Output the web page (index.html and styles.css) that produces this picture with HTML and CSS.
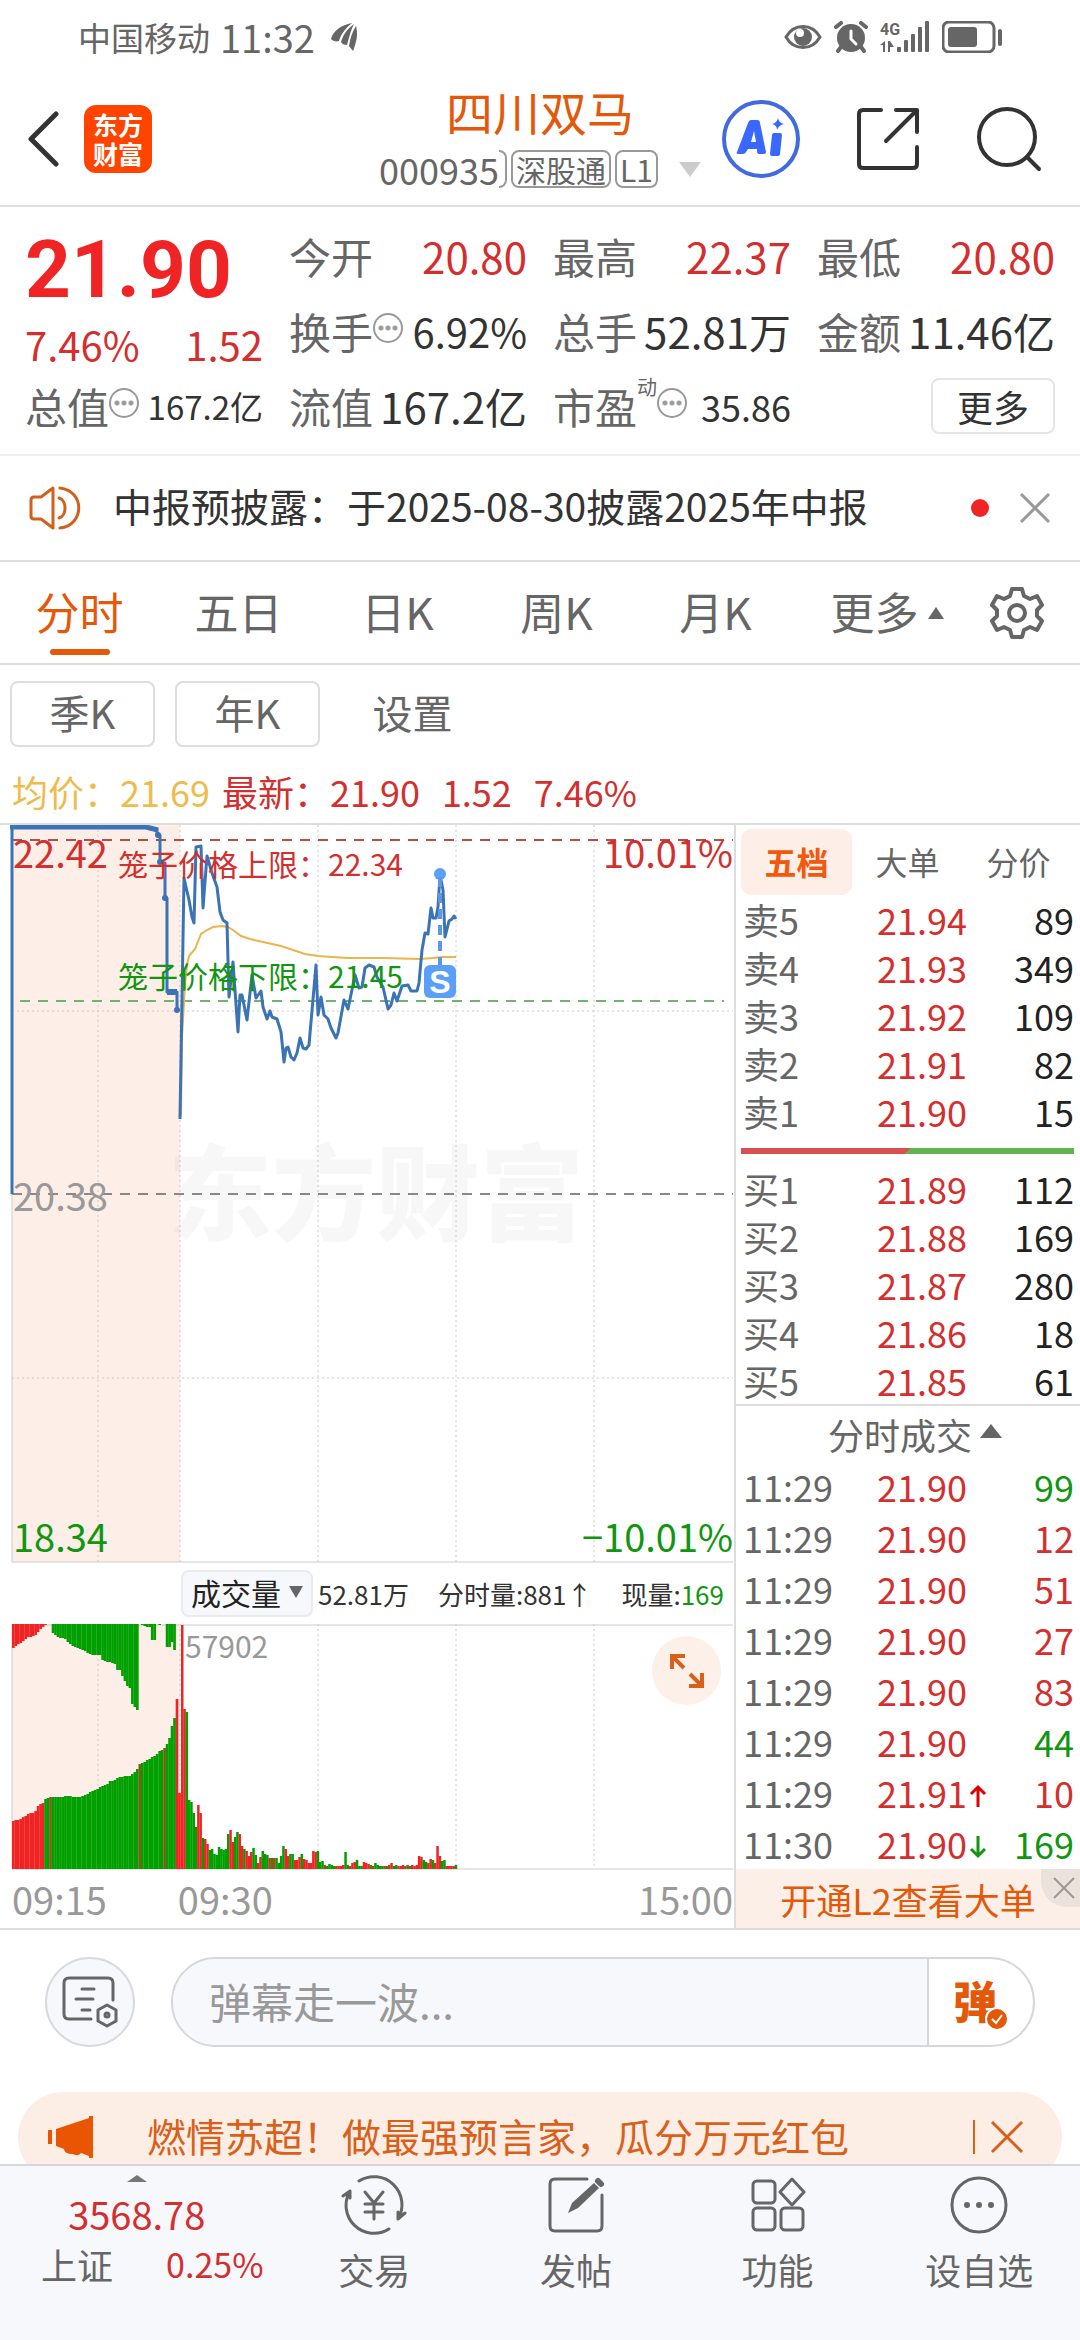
FILE: index.html
```html
<!DOCTYPE html>
<html lang="zh-CN">
<head>
    <meta charset="UTF-8">
    <meta name="viewport" content="width=device-width, initial-scale=1.0">
    <title>四川双马 000935</title>
    <link rel="stylesheet" href="styles.css">
</head>
<body>

<!-- Status bar -->
<div class="status-bar">
    <span class="carrier">中国移动</span>
    <span class="clock">11:32</span>
    <svg class="leaf" width="27" height="28" viewBox="0 0 27 28" fill="#666">
        <path d="M0 16C2 8 10 2 21 0C14 6 10 11 8 18C5 19 2 18 0 16Z"/>
        <path d="M10 19C12 12 16 6 23 1C19 9 18 15 16 22C13 22 11 21 10 19Z"/>
        <path d="M18 23C19 16 21 9 25 3C27 10 26 18 22 28Z"/>
    </svg>
    <div class="status-icons">
        <svg width="38" height="32" viewBox="0 0 38 32">
            <path d="M2 16C10 2 28 2 36 16C28 30 10 30 2 16Z" fill="none" stroke="#666" stroke-width="3"/>
            <circle cx="19" cy="16" r="9" fill="#666"/>
            <circle cx="16" cy="12" r="4" fill="#fff"/>
        </svg>
        <svg width="34" height="32" viewBox="0 0 34 32">
            <circle cx="17" cy="17" r="14" fill="#666"/>
            <path d="M2 6L7 2M27 2L32 6M7 26L4 30M27 26L30 30" stroke="#666" stroke-width="4" stroke-linecap="round"/>
            <path d="M17 10V18L22 23" fill="none" stroke="#fff" stroke-width="3" stroke-linecap="round"/>
        </svg>
        <svg width="50" height="32" viewBox="0 0 50 32" fill="#666">
            <text x="0" y="14" class="net-label">4G</text>
            <path d="M0 24L5 20V31H3V24ZM8 20H10L14 26H10V31H8Z"/>
            <rect x="17" y="26" width="4" height="5" rx="1"/>
            <rect x="24" y="19" width="4" height="12" rx="1"/>
            <rect x="31" y="13" width="4" height="18" rx="1"/>
            <rect x="38" y="6" width="4" height="25" rx="1"/>
            <rect x="45" y="0" width="4" height="31" rx="1"/>
        </svg>
        <svg width="60" height="32" viewBox="0 0 60 32">
            <rect x="1" y="1" width="51" height="30" rx="6" fill="none" stroke="#666" stroke-width="3"/>
            <rect x="6" y="6" width="29" height="20" rx="3" fill="#666"/>
            <rect x="56" y="8" width="4" height="17" rx="2" fill="#666"/>
        </svg>
    </div>
</div>

<!-- Title bar -->
<header class="header">
    <div class="header-left">
        <button class="icon-btn" aria-label="返回">
            <svg width="32" height="56" viewBox="0 0 32 56" fill="none" stroke="#333" stroke-width="5" stroke-linecap="round" stroke-linejoin="round"><path d="M28 3L3 28L28 53"/></svg>
        </button>
        <a class="logo" href="#"><span>东方</span><span>财富</span></a>
    </div>
    <div class="header-title">
        <h1>四川双马</h1>
        <div class="stock-code">
            <span>000935</span><i class="tag-edge"></i>
            <span class="tag">深股通</span>
            <span class="tag">L1</span>
            <i class="caret-down"></i>
        </div>
    </div>
    <div class="header-right">
        <button class="icon-btn" aria-label="AI">
            <svg width="78" height="78" viewBox="0 0 78 78">
                <circle cx="39" cy="39" r="37" fill="none" stroke="#4169e1" stroke-width="4"/>
                <path fill="#3a68ff" fill-rule="evenodd" d="M15 52L26 23Q27 20 29 20H35Q38 20 38 23L44 52Q44 54 42 54H37Q35 54 35 51V49H26L24 52Q23 54 21 54H16Q14 54 15 52ZM29 42H34L32 31Z"/>
                <path fill="#3a68ff" d="M52 33H58Q60 33 60 35L58 54Q58 56 56 56H50Q48 56 48 54L50 35Q50 33 52 33Z"/>
                <path fill="#3a68ff" d="M56 18Q57 23 62 24Q57 25 55 30Q55 25 50 24Q55 23 56 18Z"/>
            </svg>
        </button>
        <button class="icon-btn" aria-label="分享">
            <svg width="64" height="64" viewBox="0 0 64 64" fill="none" stroke="#333" stroke-width="4" stroke-linecap="round" stroke-linejoin="round">
                <path d="M25 3H7Q3 3 3 7V57Q3 61 7 61H57Q61 61 61 57V40"/>
                <path d="M40 3H61V25M61 3L30 34"/>
            </svg>
        </button>
        <button class="icon-btn" aria-label="搜索">
            <svg width="66" height="66" viewBox="0 0 66 66" fill="none" stroke="#333" stroke-width="4" stroke-linecap="round"><circle cx="31" cy="31" r="28"/><path d="M51 51L63 63"/></svg>
        </button>
    </div>
</header>

<main>
    <!-- Quote summary -->
    <section class="quote">
        <div class="quote-main">
            <strong>21.90</strong>
            <div class="quote-change"><span>7.46%</span><span>1.52</span></div>
        </div>
        <div class="field"><label>今开</label><b class="red">20.80</b></div>
        <div class="field"><label>最高</label><b class="red">22.37</b></div>
        <div class="field"><label>最低</label><b class="red">20.80</b></div>
        <div class="field"><label>换手</label><i class="hint"></i><b class="large">6.92%</b></div>
        <div class="field"><label>总手</label><b>52.81万</b></div>
        <div class="field"><label>金额</label><b>11.46亿</b></div>
        <div class="field"><label>总值</label><i class="hint"></i><b class="small">167.2亿</b></div>
        <div class="field"><label>流值</label><b>167.2亿</b></div>
        <div class="field"><label>市盈</label><sup>动</sup><i class="hint"></i><b class="mid">35.86</b></div>
        <div class="field"><button class="more-btn">更多</button></div>
    </section>

    <!-- Notice -->
    <section class="notice">
        <svg width="54" height="46" viewBox="0 0 54 46" fill="none" stroke="#d2601a" stroke-width="3" stroke-linejoin="round">
            <path d="M24 3L12 12H5Q2 12 2 15V31Q2 34 5 34H12L24 43Z"/>
            <path d="M30 13C38 15 38 31 30 33M31 3C56 6 56 40 31 43" stroke-linecap="round"/>
        </svg>
        <p>中报预披露：于2025-08-30披露2025年中报</p>
        <i class="dot"></i>
        <button class="icon-btn" aria-label="关闭">
            <svg width="32" height="32" viewBox="0 0 32 32" stroke="#999" stroke-width="3"><path d="M2 2L30 30M30 2L2 30"/></svg>
        </button>
    </section>

    <!-- Period tabs -->
    <nav class="tabs">
        <button class="tab active">分时</button>
        <button class="tab">五日</button>
        <button class="tab">日K</button>
        <button class="tab">周K</button>
        <button class="tab">月K</button>
        <button class="tab">更多<i class="caret-up"></i></button>
        <button class="tab-gear" aria-label="设置">
            <svg width="54" height="54" viewBox="0 0 54 54" fill="none" stroke="#666" stroke-width="4" stroke-linejoin="round">
                <path d="M22 3H32L34 10L40 13L47 10L52 19L47 24V30L52 35L47 44L40 41L34 44L32 51H22L20 44L14 41L7 44L2 35L7 30V24L2 19L7 10L14 13L20 10Z"/>
                <circle cx="27" cy="27" r="8"/>
            </svg>
        </button>
    </nav>
    <div class="sub-tabs">
        <button class="boxed">季K</button>
        <button class="boxed">年K</button>
        <button>设置</button>
    </div>
    <div class="legend">
        <span class="avg">均价：21.69</span>
        <span>最新：21.90</span>
        <span>1.52</span>
        <span>7.46%</span>
    </div>

    <section class="board">
        <div class="charts">
            <!-- Price chart -->
            <svg class="price-chart" viewBox="0 0 734 738">
                <rect x="12" y="0" width="168" height="737" fill="#fdeee7"/>
                <text class="watermark" x="168" y="408">东方财富</text>
                <g class="grid-dot">
                    <path d="M98 0V737M180 0V737M318 0V737M456 0V737M594 0V737M12 186H733M12 553H733"/>
                </g>
                <path d="M12 369V737H733" fill="none" stroke="#ccc"/>
                <path d="M12 15H733" class="dash" stroke="#b05048"/>
                <path d="M20 176H724" class="dash" stroke="#6fb36f"/>
                <path d="M12 369H733" class="dash" stroke="#888"/>
                <g class="axis">
                    <text x="13" y="43" fill="#d32f2f">22.42</text>
                    <text x="733" y="43" fill="#d32f2f" text-anchor="end">10.01%</text>
                    <text x="13" y="386" fill="#999">20.38</text>
                    <text x="13" y="727" fill="#119611">18.34</text>
                    <text x="733" y="727" fill="#119611" text-anchor="end">−10.01%</text>
                </g>
                <polyline class="avg-line" points="181,290 182,212 185,160 187,140 189,131 195,124 201,109 207,105 213,102 222,101 228,102 233,105 241,111 250,114 263,117 281,121 290,124 305,129 318,131 347,133 383,133 420,134 433,133 443,132 456,132"/>
                <path class="price-line" d="M12 369V2H146L150 4H157V10H160V37L165 38V73H167V167H177V185"/>
                <path d="M10 2H146L158 5" fill="none" stroke="#3b73b5" stroke-width="5"/>
                <path d="M167 167H177" stroke="#3b73b5" stroke-width="6"/>
                <g fill="#3b73b5"><circle cx="158" cy="10" r="3"/><circle cx="160" cy="37" r="3"/><circle cx="165" cy="73" r="3"/><circle cx="177" cy="185" r="3"/></g>
                <polyline class="price-line" points="180,294 184,53 189,75 192,92 194,98 196,22 201,21 203,83 207,31 212,48 217,62 220,87 223,95 227,98 229,172 233,137 238,207 240,170 242,170 247,195 252,150 256,173 261,166 263,182 267,194 270,186 272,192 277,194 281,207 284,237 286,223 288,222 291,232 294,235 297,228 300,213 303,223 306,224 309,220 316,140 318,190 321,172 324,190 328,194 331,203 336,213 338,208 344,175 348,184 355,150 359,163 362,162 365,143 369,140 374,142 377,152 383,162 388,184 391,180 394,168 397,176 402,161 408,160 411,166 417,166 419,158 422,125 425,108 428,109 431,83 433,93 436,93 438,82 440,50 443,65 445,112 449,96 452,94 454,91 456,94"/>
                <g class="limit">
                    <text x="118" y="51" fill="#d32f2f">笼子价格上限：22.34</text>
                    <text x="118" y="163" fill="#119611">笼子价格下限：21.45</text>
                </g>
                <circle cx="440" cy="49" r="6" fill="#5c9ff8"/>
                <path d="M440 52V140" stroke="#5b96ea" stroke-width="4" stroke-dasharray="10 6"/>
                <rect x="424" y="140" width="32" height="33" rx="6" fill="#5c9ff8"/>
                <text class="sell-mark" x="440" y="168">S</text>
            </svg>

            <div class="volume-head">
                <button class="volume-select">成交量<i></i></button>
                <span>52.81万</span>
                <span>分时量:881↑</span>
                <span>现量:<em>169</em></span>
            </div>

            <!-- Volume chart, bars are added by script.js -->
            <div class="volume-wrap">
                <svg class="volume-chart" viewBox="0 0 734 246">
                    <rect x="12" y="0" width="168" height="245" fill="#fdeee7"/>
                    <path class="grid-dot" d="M98 0V245M180 0V245M318 0V245M456 0V245M594 0V245"/>
                    <path d="M12 0V245M12 1H733M12 245H733" fill="none" stroke="#ccc"/>
                    <g id="volume-bars"></g>
                    <text class="volume-max" x="185" y="34">57902</text>
                </svg>
                <button class="expand" aria-label="全屏">
                    <svg width="34" height="34" viewBox="0 0 34 34" fill="none" stroke="#d9601a" stroke-width="4"><path d="M2 15V2H15M2 2L14 14M20 20L32 32M32 19V32H19"/></svg>
                </button>
            </div>
            <div class="time-axis"><span>09:15</span><span>09:30</span><span>15:00</span></div>
        </div>

        <!-- Order book -->
        <aside class="book">
            <div class="book-tabs">
                <button class="active">五档</button>
                <button>大单</button>
                <button>分价</button>
            </div>
            <table class="levels">
                <tr><th>卖5</th><td>21.94</td><td>89</td></tr>
                <tr><th>卖4</th><td>21.93</td><td>349</td></tr>
                <tr><th>卖3</th><td>21.92</td><td>109</td></tr>
                <tr><th>卖2</th><td>21.91</td><td>82</td></tr>
                <tr><th>卖1</th><td>21.90</td><td>15</td></tr>
            </table>
            <div class="ratio"></div>
            <table class="levels">
                <tr><th>买1</th><td>21.89</td><td>112</td></tr>
                <tr><th>买2</th><td>21.88</td><td>169</td></tr>
                <tr><th>买3</th><td>21.87</td><td>280</td></tr>
                <tr><th>买4</th><td>21.86</td><td>18</td></tr>
                <tr><th>买5</th><td>21.85</td><td>61</td></tr>
            </table>
            <button class="trades-head">分时成交<i></i></button>
            <table class="trades">
                <tr><th>11:29</th><td>21.90</td><td class="green">99</td></tr>
                <tr><th>11:29</th><td>21.90</td><td>12</td></tr>
                <tr><th>11:29</th><td>21.90</td><td>51</td></tr>
                <tr><th>11:29</th><td>21.90</td><td>27</td></tr>
                <tr><th>11:29</th><td>21.90</td><td>83</td></tr>
                <tr><th>11:29</th><td>21.90</td><td class="green">44</td></tr>
                <tr><th>11:29</th><td>21.91<svg width="18" height="24" viewBox="0 0 18 24" fill="none" stroke="#d00" stroke-width="3"><path d="M9 23V3M2 10L9 3L16 10"/></svg></td><td>10</td></tr>
                <tr><th>11:30</th><td>21.90<svg width="18" height="24" viewBox="0 0 18 24" fill="none" stroke="#119611" stroke-width="3"><path d="M9 1V21M2 14L9 21L16 14"/></svg></td><td class="green">169</td></tr>
            </table>
            <div class="l2">
                <a href="#">开通L2查看大单</a>
                <button aria-label="关闭">
                    <svg width="22" height="22" viewBox="0 0 22 22" stroke="#999" stroke-width="2"><path d="M1 1L21 21M21 1L1 21"/></svg>
                </button>
            </div>
        </aside>
    </section>

    <!-- Comment bar -->
    <form class="comment">
        <button type="button" class="comment-settings" aria-label="弹幕设置">
            <svg width="56" height="52" viewBox="0 0 56 52" fill="none" stroke="#666" stroke-width="3" stroke-linecap="round">
                <path d="M29 43H7Q2 43 2 38V7Q2 2 7 2H46Q51 2 51 7V24"/>
                <path d="M20 13H32M14 23H31M20 34H28"/>
                <path d="M45 29L54 34V45L45 50L36 45V34Z" stroke-linejoin="round"/>
                <circle cx="45" cy="39" r="2"/>
            </svg>
        </button>
        <div class="comment-box">
            <input type="text" placeholder="弹幕走一波..." aria-label="弹幕">
            <button type="button" class="send">弹<svg width="24" height="24" viewBox="0 0 24 24"><circle cx="12" cy="12" r="11" fill="#e4580a" stroke="#fff" stroke-width="2"/><path d="M7 12L11 16L17 8" fill="none" stroke="#fff" stroke-width="2"/></svg></button>
        </div>
    </form>

    <!-- Promo -->
    <div class="promo">
        <svg width="46" height="42" viewBox="0 0 46 42" fill="#ea5504">
            <rect x="0" y="14" width="4" height="14"/>
            <path d="M8 13L41 2V0H45V42H41V40L33 37Q30 41 25 38Q16 38 16 33L8 30Z"/>
        </svg>
        <a href="#">燃情苏超！做最强预言家，瓜分万元红包</a>
        <button class="icon-btn" aria-label="关闭">
            <svg width="34" height="34" viewBox="0 0 34 34" stroke="#d9601a" stroke-width="3"><path d="M2 2L32 32M32 2L2 32"/></svg>
        </button>
    </div>
</main>

<!-- Bottom bar -->
<nav class="bottom-nav">
    <a class="index" href="#">
        <i></i>
        <b>3568.78</b>
        <span class="index-row"><span>上证</span><em>0.25%</em></span>
    </a>
    <a href="#">
        <svg width="66" height="60" viewBox="0 0 66 60" fill="none" stroke="#666" stroke-width="3" stroke-linecap="round" stroke-linejoin="round">
            <path d="M18 6A28 28 0 0 1 57 44L64 38M57 44V37"/>
            <path d="M48 54A28 28 0 0 1 9 16L2 21M9 16V23"/>
            <path d="M24 17L33 28L42 17M33 28V44M24 29H42M24 37H42"/>
        </svg>
        <span>交易</span>
    </a>
    <a href="#">
        <svg width="66" height="60" viewBox="0 0 66 60" fill="none" stroke="#666" stroke-width="3" stroke-linecap="round">
            <path d="M44 4H12Q7 4 7 9V51Q7 56 12 56H54Q59 56 59 51V20"/>
            <path d="M25 38L29 28L51 8L56 13L35 33Z" fill="#666" stroke="none"/>
            <path d="M55 6L58 9" stroke-width="6"/>
        </svg>
        <span>发帖</span>
    </a>
    <a href="#">
        <svg width="66" height="60" viewBox="0 0 66 60" fill="none" stroke="#666" stroke-width="3" stroke-linejoin="round">
            <rect x="8" y="6" width="22" height="22" rx="4"/>
            <rect x="8" y="33" width="22" height="22" rx="4"/>
            <rect x="36" y="33" width="22" height="22" rx="4"/>
            <path d="M47 4L59 17L47 30L35 17Z"/>
        </svg>
        <span>功能</span>
    </a>
    <a href="#">
        <svg width="66" height="60" viewBox="0 0 66 60" fill="none" stroke="#666" stroke-width="3">
            <circle cx="33" cy="30" r="27"/>
            <g fill="#666" stroke="none"><circle cx="21" cy="30" r="3"/><circle cx="33" cy="30" r="3"/><circle cx="45" cy="30" r="3"/></g>
        </svg>
        <span>设自选</span>
    </a>
</nav>

<script src="script.js"></script>
</body>
</html>
```
FILE: styles.css
```css
* {
    box-sizing: border-box;
}
body {
    margin: 0;
    height: 100vh;
    display: flex;
    flex-direction: column;
    font-family: "Noto Sans CJK SC", sans-serif;
    font-size: 36px;
    color: #666;
    background-color: #fff;
}
button, input {
    font-family: inherit;
    font-size: inherit;
    color: inherit;
    background: none;
    border: 0;
    padding: 0;
    margin: 0;
}
a {
    color: inherit;
    text-decoration: none;
}
i, em {
    font-style: normal;
}
svg {
    display: block;
    flex-shrink: 0;
}
.red {
    color: #d32f2f;
}
.icon-btn {
    display: flex;
}

/* status bar */
.status-bar {
    display: flex;
    align-items: center;
    height: 73px;
    padding: 0 78px;
    flex-shrink: 0;
}
.carrier {
    font-size: 33px;
}
.clock {
    font-size: 38px;
    margin-left: 10px;
}
.leaf {
    margin-left: 16px;
}
.status-icons {
    display: flex;
    gap: 12px;
    margin-left: auto;
}
.net-label {
    font: bold 16px Roboto, sans-serif;
}

/* title bar */
.header {
    display: grid;
    grid-template-columns: 1fr auto 1fr;
    align-items: center;
    height: 134px;
    padding: 0 28px;
    border-bottom: 2px solid #ddd;
    flex-shrink: 0;
}
.header-left, .header-right {
    display: flex;
    align-items: center;
}
.header-left {
    gap: 24px;
}
.header-right {
    gap: 56px;
    justify-content: flex-end;
    padding-right: 10px;
}
.logo {
    display: flex;
    flex-direction: column;
    align-items: center;
    justify-content: center;
    width: 68px;
    height: 68px;
    border-radius: 12px;
    background-color: #ff4400;
    color: #fff;
    font-size: 25px;
    font-weight: bold;
    line-height: 29px;
}
.header-title {
    text-align: center;
}
.header-title h1 {
    margin: 0;
    font-size: 47px;
    font-weight: normal;
    line-height: 60px;
    color: #e4580a;
}
.stock-code {
    display: flex;
    align-items: center;
    line-height: 56px;
}
.tag-edge {
    width: 8px;
    height: 38px;
    border: 2px solid #999;
    border-left: 0;
    border-radius: 0 8px 8px 0;
}
.tag {
    margin-left: 4px;
    padding: 0 3px;
    border: 2px solid #999;
    border-radius: 8px;
    font-size: 30px;
    line-height: 34px;
}
.caret-down {
    margin-left: 21px;
    border: 11px solid transparent;
    border-top: 15px solid #ccc;
    border-bottom: 0;
}

main {
    flex: 1;
    min-height: 0;
    overflow: hidden;
}

/* quote */
.quote {
    display: grid;
    grid-template-columns: repeat(4, 1fr);
    grid-auto-rows: 75px;
    column-gap: 26px;
    padding: 12px 25px 10px;
    border-bottom: 2px solid #eee;
}
.quote-main {
    grid-row: span 2;
    color: #d32f2f;
}
.quote-main strong {
    display: block;
    font-family: Roboto, sans-serif;
    font-size: 80px;
    line-height: 102px;
    color: #f02424;
}
.quote-change {
    display: flex;
    justify-content: space-between;
    font-size: 40px;
    line-height: 46px;
}
.field {
    display: flex;
    align-items: center;
    padding-bottom: 2px;
    font-size: 42px;
    white-space: nowrap;
}
.field b {
    margin-left: auto;
    font-weight: normal;
    color: #333;
}
.field b.red {
    color: #d32f2f;
}
.field b.small {
    font-size: 33px;
}
.field b.mid {
    font-size: 36px;
}
.field b.large {
    font-size: 40px;
}
.field sup {
    align-self: flex-start;
    font-size: 20px;
    line-height: 36px;
}
.hint {
    width: 30px;
    height: 30px;
    border: 2px solid #999;
    border-radius: 50%;
    background: radial-gradient(circle, #999 2px, transparent 3px) center / 7px 30px repeat-x content-box;
    padding: 0 2px;
    margin-bottom: 6px;
}
.more-btn {
    margin-left: auto;
    width: 124px;
    height: 56px;
    border: 2px solid #e5e5e5;
    border-radius: 8px;
    font-size: 36px;
    line-height: 46px;
    color: #333;
}

/* notice */
.notice {
    display: flex;
    align-items: center;
    height: 106px;
    padding: 0 29px;
    border-bottom: 2px solid #ddd;
    font-size: 39px;
    color: #333;
}
.notice p {
    margin: 0 0 0 30px;
    padding-bottom: 6px;
    flex: 1;
    white-space: nowrap;
}
.dot {
    width: 18px;
    height: 18px;
    margin-right: 30px;
    border-radius: 50%;
    background-color: #f02424;
}

/* tabs */
.tabs {
    display: flex;
    height: 103px;
    border-bottom: 2px solid #ddd;
}
.tab {
    position: relative;
    flex: 159;
    padding-bottom: 3px;
    font-size: 44px;
    line-height: 60px;
}
.tab.active {
    color: #e4580a;
}
.tab.active::after {
    content: "";
    position: absolute;
    left: 50%;
    bottom: 8px;
    width: 60px;
    height: 6px;
    margin-left: -30px;
    border-radius: 3px;
    background-color: #e4580a;
}
.caret-up {
    position: absolute;
    right: 10px;
    top: 45px;
    border: 8px solid transparent;
    border-bottom: 12px solid #666;
    border-top: 0;
}
.tab-gear {
    flex: 126;
    display: flex;
    align-items: center;
    justify-content: center;
}
.sub-tabs {
    display: flex;
    gap: 20px;
    padding: 16px 10px;
}
.sub-tabs button {
    width: 145px;
    height: 66px;
    padding-bottom: 4px;
    font-size: 40px;
    line-height: 58px;
}
.sub-tabs .boxed {
    border: 2px solid #ddd;
    border-radius: 8px;
}
.legend {
    display: flex;
    gap: 22px;
    padding: 0 12px 4px;
    line-height: 56px;
    color: #d32f2f;
}
.legend .avg {
    margin-right: -10px;
    color: #eebb4d;
}

/* charts */
.board {
    display: grid;
    grid-template-columns: 734fr 346fr;
    border-top: 2px solid #ddd;
    border-bottom: 2px solid #ddd;
}
.price-chart, .volume-chart {
    width: 100%;
    height: auto;
}
.grid-dot {
    fill: none;
    stroke: #ccc;
    stroke-width: 1;
    stroke-dasharray: 2 3;
}
.dash {
    fill: none;
    stroke-width: 2;
    stroke-dasharray: 10 8;
}
.watermark {
    font-size: 104px;
    font-weight: 900;
    fill: #000;
    fill-opacity: 0.03;
}
.axis {
    font-size: 38px;
}
.limit {
    font-size: 30px;
}
.price-line {
    fill: none;
    stroke: #3b73b5;
    stroke-width: 3;
    stroke-linejoin: round;
}
.avg-line {
    fill: none;
    stroke: #ecb44c;
    stroke-width: 2;
}
.sell-mark {
    font: bold 32px "Liberation Sans", sans-serif;
    fill: #fff;
    text-anchor: middle;
}
.volume-head {
    display: flex;
    align-items: center;
    justify-content: space-between;
    height: 61px;
    padding: 0 10px 0 181px;
    font-size: 26px;
    white-space: nowrap;
    color: #333;
}
.volume-head em {
    color: #119611;
}
.volume-select {
    display: flex;
    align-items: center;
    gap: 8px;
    height: 47px;
    margin-right: -24px;
    padding: 0 8px 4px;
    border: 2px solid #eaebee;
    border-radius: 8px;
    background-color: #f7f8fb;
    font-size: 30px;
    color: #222;
}
.volume-select i {
    border: 7px solid transparent;
    border-top: 12px solid #666;
    border-bottom: 0;
}
.volume-wrap {
    position: relative;
}
.volume-max {
    font-size: 30px;
    fill: #999;
}
.bar-r {
    fill: #f02424;
}
.bar-g {
    fill: #00a000;
}
.bar-b {
    fill: #91551a;
}
.expand {
    position: absolute;
    top: 12px;
    right: 13px;
    display: flex;
    align-items: center;
    justify-content: center;
    width: 69px;
    height: 69px;
    border-radius: 50%;
    background-color: #fdf0e9;
}
.time-axis {
    display: grid;
    grid-template-columns: 23% 1fr auto;
    padding: 0 1px 0 12px;
    font-size: 38px;
    line-height: 58px;
    color: #999;
}

/* order book */
.book {
    display: flex;
    flex-direction: column;
    border-left: 2px solid #ddd;
}
.book-tabs {
    display: grid;
    grid-template-columns: repeat(3, 1fr);
    padding: 4px 6px 0 5px;
    font-size: 32px;
}
.book-tabs button {
    height: 66px;
    padding-bottom: 2px;
    border-radius: 10px;
}
.book-tabs .active {
    background-color: #fdeee7;
    color: #f2590d;
    font-weight: bold;
}
.levels, .trades {
    width: 100%;
    table-layout: fixed;
    border-collapse: collapse;
    color: #d32f2f;
}
.levels tr {
    height: 48px;
    line-height: 48px;
}
.trades tr {
    height: 51px;
    line-height: 51px;
}
.book th {
    width: 141px;
    padding: 0 0 0 7px;
    font-weight: normal;
    text-align: left;
    color: #666;
}
.book td {
    padding: 0;
}
.book td:last-child {
    width: 80px;
    padding-right: 6px;
    text-align: right;
}
.levels td:last-child {
    color: #222;
}
.trades td svg {
    display: inline-block;
    margin-left: 2px;
}
.trades .green {
    color: #119611;
}
.ratio {
    height: 6px;
    margin: 13px 6px 10px 5px;
    background: linear-gradient(135deg, #d95050 50%, #62b350 50%);
}
.trades-head {
    display: flex;
    align-items: center;
    justify-content: center;
    gap: 8px;
    height: 57px;
    padding-left: 14px;
    border-top: 2px solid #ddd;
}
.trades-head i {
    margin-bottom: 6px;
    border: 11px solid transparent;
    border-bottom: 14px solid #666;
    border-top: 0;
}
.l2 {
    position: relative;
    flex: 1;
    display: flex;
    align-items: center;
    justify-content: center;
    background-color: #fcefe8;
    line-height: 54px;
    color: #e4580a;
}
.l2 button {
    position: absolute;
    top: 0;
    right: 0;
    display: flex;
    align-items: center;
    justify-content: center;
    width: 39px;
    height: 38px;
    padding-left: 6px;
    border-bottom-left-radius: 26px;
    background-color: #ece2dc;
}

/* comment bar */
.comment {
    display: flex;
    gap: 36px;
    padding: 27px 45px 45px;
}
.comment-settings {
    display: flex;
    align-items: center;
    justify-content: center;
    width: 90px;
    height: 90px;
    border: 2px solid #d8dadf;
    border-radius: 50%;
    background-color: #f7f8fb;
}
.comment-box {
    flex: 1;
    display: flex;
    height: 90px;
    border: 2px solid #d5d7da;
    border-radius: 45px;
    overflow: hidden;
}
.comment-box input {
    flex: 1;
    min-width: 0;
    padding: 0 36px 4px;
    background-color: #f7f8fb;
    font-size: 42px;
}
.comment-box input::placeholder {
    color: #999;
    opacity: 1;
}
.send {
    position: relative;
    width: 106px;
    padding: 0 12px 4px 0;
    border-left: 2px solid #d5d7da;
    font-size: 44px;
    font-weight: 900;
    line-height: 60px;
    color: #e4580a;
}
.send svg {
    position: absolute;
    right: 24px;
    bottom: 14px;
}

/* promo */
.promo {
    display: flex;
    align-items: center;
    height: 90px;
    margin: 0 18px;
    padding: 0 38px 0 30px;
    border-radius: 48px;
    background-color: #fdeee5;
    font-size: 39px;
    color: #d9601a;
}
.promo a {
    flex: 1;
    margin-left: 53px;
    padding-bottom: 4px;
    white-space: nowrap;
}
.promo .icon-btn {
    padding-left: 15px;
    border-left: 2px solid #d9601a;
}

/* bottom bar */
.bottom-nav {
    display: grid;
    grid-template-columns: 274fr repeat(4, 202fr);
    height: 176px;
    border-top: 2px solid #d5d7da;
    background-color: #f7f8fb;
    flex-shrink: 0;
}
.bottom-nav a {
    display: flex;
    flex-direction: column;
    align-items: center;
    padding-top: 9px;
    line-height: 68px;
}
.index i {
    border: 10px solid transparent;
    border-bottom: 7px solid #777;
    border-top: 0;
}
.bottom-nav .index b {
    font-size: 38px;
    font-weight: normal;
    line-height: 64px;
    color: #d32f2f;
}
.bottom-nav .index-row {
    align-self: stretch;
    display: flex;
    justify-content: space-between;
    padding: 0 10px 0 41px;
    line-height: 36px;
}
.index-row em {
    font-size: 34px;
    color: #d32f2f;
}
```
FILE: script.js
```js
// r = up, g = down, b = unchanged direction
const auction = 'r48 r49 r49 r50 r52 r53 r55 r56 r56 r58 r63 r65 r66 g70 g71 b72 g72 g72 g72 g72 g72 g73 g73 g73 g72 g72 g72 g72 g73 g74 g75 g77 g78 g79 g80 g82 g83 g84 g85 g88 g88 g89 g91 g92 g92 g93 g93 g93 g95 g97 g100 b105 g106 g107 g109 g110 g112 g113 g115 g118 g119 b121 g125 g131 g143 g151 r170 r76';
const unmatched = 'r24 r22 r20 r19 r17 r15 r13 r13 r12 r11 r8 r5 r3 r1 g0 g0 g9 g11 g13 g14 g14 g15 g18 g20 g22 g23 g24 g25 g26 g27 g29 g30 g31 g31 g31 g31 g36 g37 g38 g38 g39 g40 g46 g46 g52 g57 g62 g64 g80 g83 g86 g0 g1 g2 g3 g3 g16 g16 g0 g1 g0 g0 g23 g23 g18 g26 g0';
const minutes = 'r244 r160 g157 g69 g67 g56 g42 r64 r56 g31 r30 r25 g19 g20 g15 g14 g22 g20 g19 g20 g35 r39 r27 g32 g37 r35 r23 g20 r18 r13 r17 g21 g14 r6 r12 g18 g15 g14 r11 g11 r11 g11 g6 g13 g23 r20 r13 g15 g15 r9 r9 r12 g15 r10 r9 r6 r6 r18 r17 g18 g7 g8 r4 g3 g5 g4 g3 r3 r3 r3 r4 g17 g4 r3 r6 r7 g9 g3 g3 r7 r6 r5 g4 r3 g6 g4 g3 g3 r3 g3 r4 r6 g3 g4 r3 r3 r4 g3 r4 g3 r4 r3 r4 r13 r12 g9 g7 r6 r10 g9 r6 r23 r13 g8 g9 r3 r3 r3 r3 g4';

const group = document.getElementById('volume-bars');

function drawBars(data, start, step, fromTop) {
    data.split(' ').forEach((item, i) => {
        const height = Number(item.slice(1));
        const bar = document.createElementNS('http://www.w3.org/2000/svg', 'rect');
        bar.setAttribute('class', 'bar-' + item[0]);
        bar.setAttribute('x', start + i * step);
        bar.setAttribute('y', fromTop ? 0 : 245 - height);
        bar.setAttribute('width', step + 0.2);
        bar.setAttribute('height', height);
        group.appendChild(bar);
    });
}

drawBars(auction, 12, 2.48, false);
drawBars(unmatched, 12, 2.48, true);
drawBars(minutes, 181, 2.3, false);
```
